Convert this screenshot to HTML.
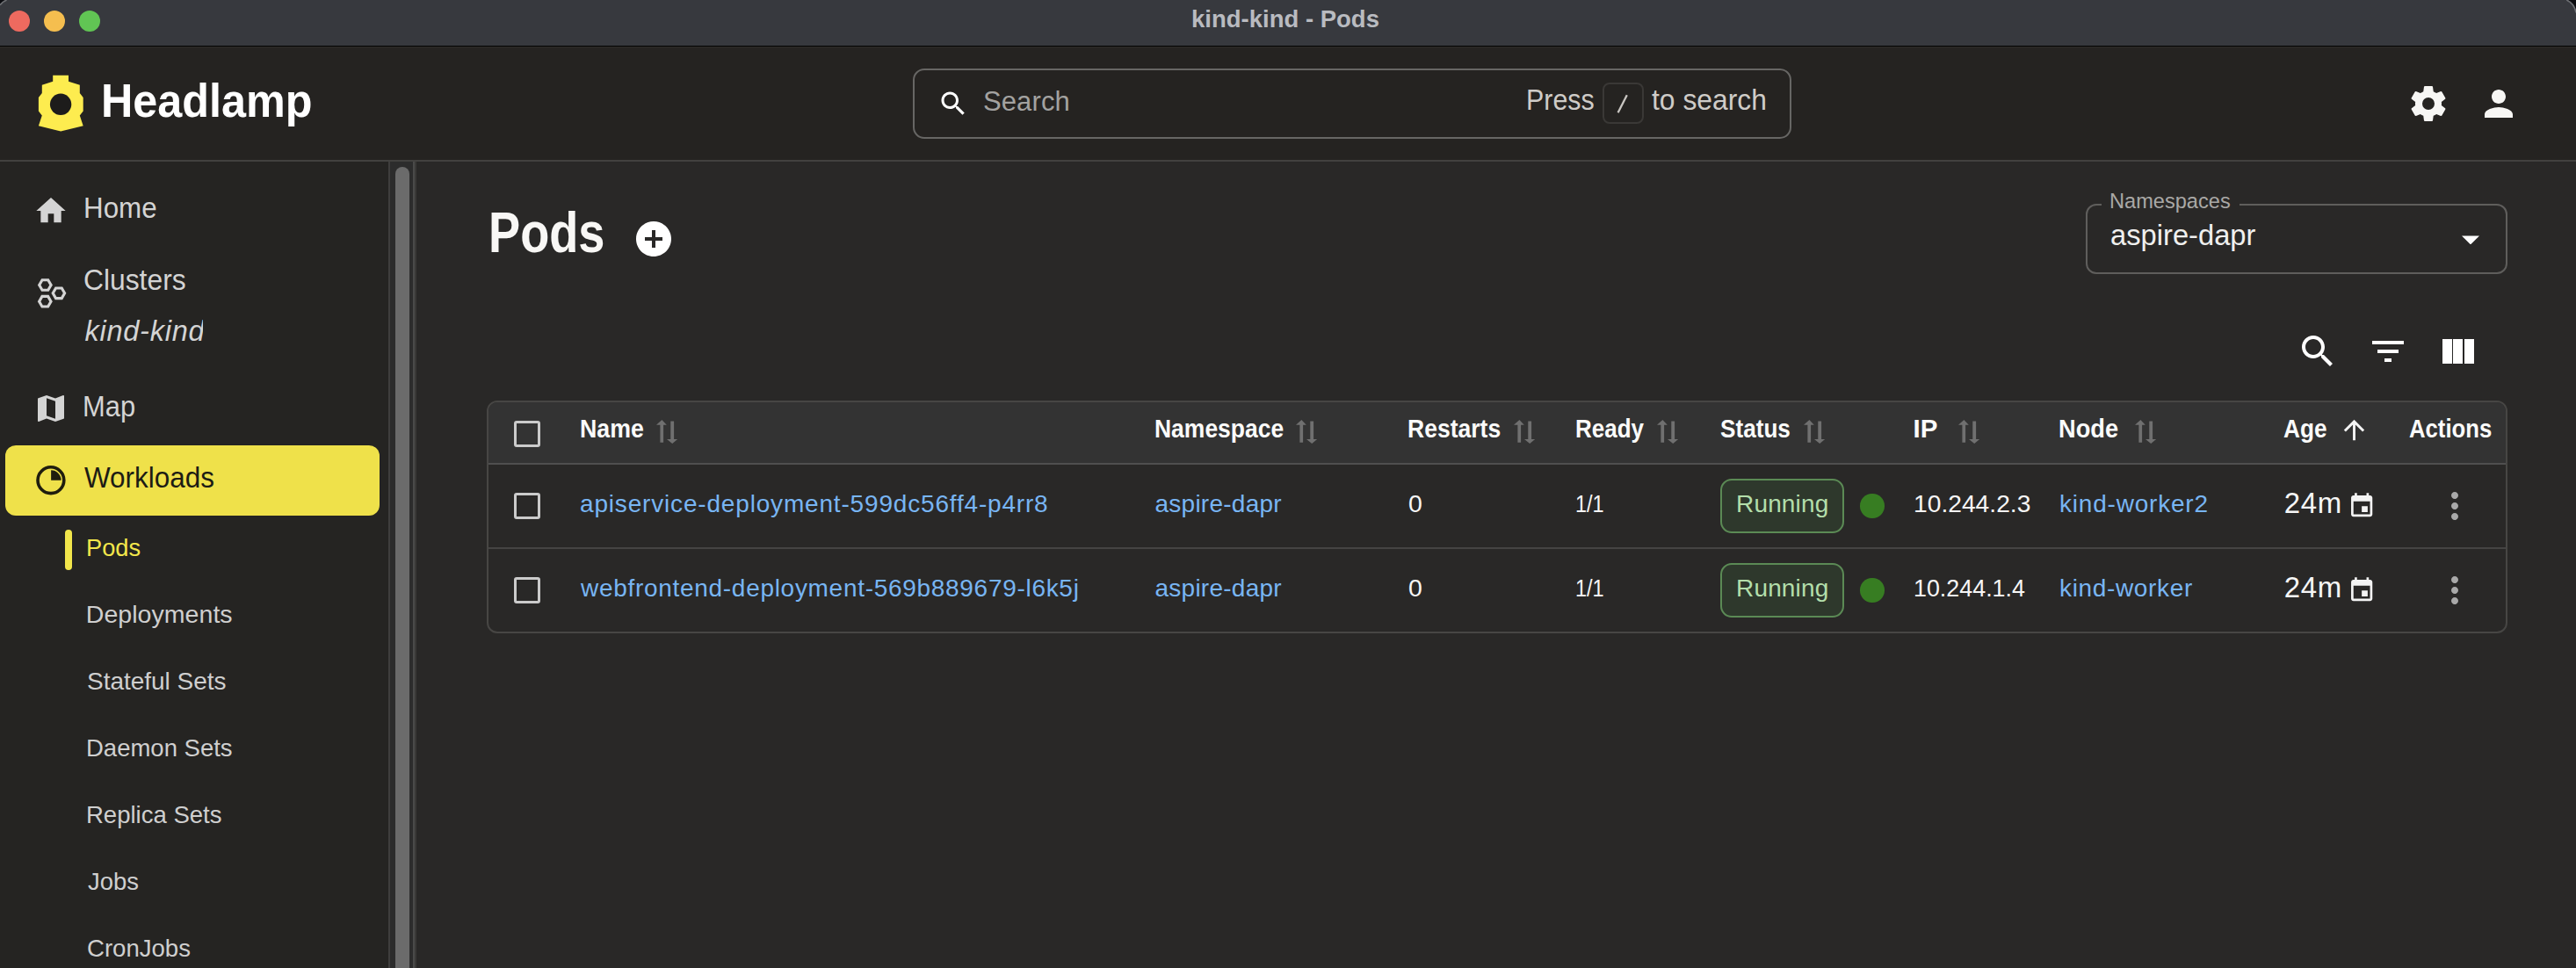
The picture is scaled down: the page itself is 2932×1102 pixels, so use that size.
<!DOCTYPE html><html><head><meta charset="utf-8"><title>Headlamp - Pods</title><style>
*{margin:0;padding:0;box-sizing:border-box}
html,body{width:2932px;height:1102px;overflow:hidden;background:#15171c;font-family:"Liberation Sans",sans-serif}
.a{position:absolute}
.t{position:absolute;white-space:nowrap;font-family:"Liberation Sans",sans-serif}
</style></head><body><div class="a" style="left:0;top:0;width:2932px;height:1102px;background:#292827;overflow:hidden"><div class="a" style="left:0;top:0;width:2932px;height:52px;background:#37393e"></div><div class="a" style="left:0;top:52px;width:2932px;height:1px;background:#000"></div><div class="a" style="left:0;top:53px;width:2932px;height:1px;background:#2e2c29"></div><div class="a" style="left:10px;top:12px;width:24px;height:24px;border-radius:50%;background:#ee6a5f"></div><div class="a" style="left:50px;top:12px;width:24px;height:24px;border-radius:50%;background:#f5be4f"></div><div class="a" style="left:90px;top:12px;width:24px;height:24px;border-radius:50%;background:#61c554"></div><div class="a" style="left:0;top:54px;width:2932px;height:128px;background:#252321"></div><div class="a" style="left:0;top:182px;width:2932px;height:2px;background:#42413f"></div><svg class="a" style="left:0px;top:0px;" width="120" height="160" viewBox="0 0 120 160"><polygon points="60.2,85.8 78,85.8 78,92.8 90.8,96.7 90.8,106 94.7,111 94.7,126.5 90.8,131.5 94.7,143.2 69.1,149.4 43.9,143.2 47.8,131.5 43.9,126.5 43.9,111 47.8,106 47.8,96.7 60.2,92.8" fill="#fdec4f"/><circle cx="69.1" cy="118.8" r="12.2" fill="#1d1c1b"/></svg><div class="a" style="left:1039px;top:78px;width:1000px;height:80px;border:2px solid #676664;border-radius:13px;background:#252321"></div><svg class="a" style="left:1066.6px;top:99.5px;" width="36" height="36" viewBox="0 0 24 24"><path fill="#fff" d="M15.5 14h-.79l-.28-.27C15.410 12.59 16 11.11 16 9.5 16 5.91 13.09 3 9.5 3S3 5.91 3 9.5 5.91 16 9.5 16c1.61 0 3.09-.59 4.23-1.57l.27.28v.79l5 4.99L20.49 19l-4.99-5zm-6 0C7.01 14 5 11.99 5 9.5S7.01 5 9.5 5 14 7.01 14 9.5 11.99 14 9.5 14z"/></svg><div class="a" style="left:1823.7px;top:94.3px;width:47.3px;height:47.2px;border:2px solid #3a3836;border-radius:8px"></div><svg class="a" style="left:1830px;top:100px;" width="40" height="40" viewBox="1830 100 40 40"><path d="M1841.6 128.3L1851.8 108.2" stroke="#c9c6c2" stroke-width="2.3"/></svg><svg class="a" style="left:2740px;top:94px;" width="48" height="48" viewBox="0 0 24 24"><path fill="#f7f6f4" d="M12,15.5A3.5,3.5 0 0,1 8.5,12A3.5,3.5 0 0,1 12,8.5A3.5,3.5 0 0,1 15.5,12A3.5,3.5 0 0,1 12,15.5M19.43,12.97C19.47,12.65 19.5,12.33 19.5,12C19.5,11.67 19.47,11.34 19.43,11L21.54,9.37C21.730,9.22 21.78,8.95 21.66,8.73L19.66,5.27C19.54,5.05 19.27,4.96 19.05,5.05L16.56,6.05C16.04,5.66 15.5,5.32 14.87,5.07L14.5,2.42C14.46,2.18 14.25,2 14,2H10C9.75,2 9.54,2.18 9.5,2.42L9.13,5.07C8.5,5.32 7.96,5.66 7.44,6.05L4.95,5.05C4.73,4.96 4.46,5.05 4.34,5.27L2.34,8.73C2.21,8.95 2.27,9.22 2.46,9.37L4.57,11C4.53,11.34 4.5,11.67 4.5,12C4.5,12.33 4.53,12.65 4.57,12.97L2.46,14.63C2.27,14.78 2.21,15.05 2.34,15.27L4.34,18.73C4.46,18.95 4.73,19.03 4.95,18.95L7.44,17.940C7.96,18.34 8.5,18.68 9.13,18.93L9.5,21.58C9.54,21.82 9.75,22 10,22H14C14.25,22 14.46,21.82 14.5,21.58L14.87,18.93C15.5,18.67 16.04,18.34 16.56,17.94L19.05,18.95C19.27,19.03 19.54,18.95 19.66,18.73L21.66,15.27C21.78,15.05 21.73,14.78 21.54,14.63L19.43,12.97Z"/></svg><svg class="a" style="left:2820px;top:94px;" width="48" height="48" viewBox="0 0 24 24"><path fill="#f7f6f4" d="M12 12c2.21 0 4-1.790 4-4s-1.79-4-4-4-4 1.79-4 4 1.79 4 4 4zm0 2c-2.67 0-8 1.34-8 4v2h16v-2c0-2.66-5.33-4-8-4z"/></svg><div class="a" style="left:0;top:184px;width:442px;height:918px;background:#252422"></div><div class="a" style="left:442px;top:184px;width:2px;height:918px;background:#3f3e3d"></div><div class="a" style="left:444px;top:184px;width:26px;height:918px;background:#2c2c2c"></div><div class="a" style="left:450px;top:190px;width:16px;height:940px;border-radius:8px;background:#6b6b6b"></div><div class="a" style="left:470px;top:184px;width:2px;height:918px;background:#4a4a49"></div><div class="a" style="left:472px;top:184px;width:2px;height:918px;background:#3a3937"></div><svg class="a" style="left:38px;top:220px;" width="40" height="40" viewBox="0 0 24 24"><path fill="#d4d4d4" d="M10 20v-6h4v6h5v-8h3L12 3 2 12h3v8z"/></svg><svg class="a" style="left:0px;top:300px;" width="100" height="60" viewBox="0 300 100 60"><path fill="#d4d4d4" fill-rule="evenodd" d="M59.90,324.50 L55.65,331.86 L47.15,331.86 L42.90,324.50 L47.15,317.14 L55.65,317.14ZM56.30,324.50 L53.85,328.74 L48.95,328.74 L46.50,324.50 L48.95,320.26 L53.85,320.26ZM75.40,333.80 L71.15,341.16 L62.65,341.16 L58.40,333.80 L62.65,326.44 L71.15,326.44ZM71.80,333.80 L69.35,338.04 L64.45,338.04 L62.00,333.80 L64.45,329.56 L69.35,329.56ZM59.80,343.20 L55.55,350.56 L47.05,350.56 L42.80,343.20 L47.05,335.84 L55.55,335.84ZM56.20,343.20 L53.75,347.44 L48.85,347.44 L46.40,343.20 L48.85,338.96 L53.75,338.96Z"/></svg><svg class="a" style="left:37.8px;top:444.8px;" width="40" height="40" viewBox="0 0 24 24"><path fill="#d4d4d4" d="M20.5 3l-.16.03L15 5.1 9 3 3.36 4.9c-.21.07-.36.25-.36.48V20.5c0 .28.22.5.5.5l.16-.03L9 18.9l6 2.1 5.64-1.9c.21-.07.36-.25.36-.48V3.5c0-.28-.22-.5-.5-.5zM15 19l-6-2.11V5l6 2.11V19z"/></svg><div class="a" style="left:6px;top:507px;width:425.5px;height:80px;border-radius:12px;background:#efe14a"></div><svg class="a" style="left:0px;top:500px;" width="100" height="100" viewBox="0 500 100 100"><circle cx="57.9" cy="546.7" r="14.9" fill="none" stroke="#1f1d0e" stroke-width="3.6"/><path d="M58.1 546.8V535.3A11.5 11.5 0 0 1 69.6 546.8Z" fill="#1f1d0e"/></svg><div class="a" style="left:74.4px;top:602.6px;width:7.6px;height:46px;border-radius:4px;background:#f2e64b"></div><svg class="a" style="left:720px;top:248px;" width="48" height="48" viewBox="0 0 24 24"><path fill="#fff" d="M12 2C6.48 2 2 6.48 2 12s4.48 10 10 10 10-4.48 10-10S17.52 2 12 2zm5 11h-4v4h-2v-4H7v-2h4V7h2v4h4v2z"/></svg><div class="a" style="left:2374px;top:232px;width:479.5px;height:80px;border:2px solid #5f5e5c;border-radius:12px"></div><div class="a" style="left:2391.7px;top:228px;width:157.5px;height:8px;background:#292827"></div><svg class="a" style="left:2801.8px;top:267.5px;" width="20" height="10.8" viewBox="0 0 20 10"><path d="M0 0H20L10 10Z" fill="#ffffff"/></svg><svg class="a" style="left:2613.5px;top:375.9px;" width="48" height="48" viewBox="0 0 24 24"><path fill="#fff" d="M15.5 14h-.79l-.28-.27C15.41 12.59 16 11.11 16 9.5 16 5.91 13.09 3 9.5 3S3 5.91 3 9.5 5.91 16 9.5 16c1.61 0 3.09-.59 4.23-1.57l.27.28v.79l5 4.99L20.49 19l-4.99-5zm-6 0C7.01 14 5 11.99 5 9.5S7.01 5 9.5 5 14 7.01 14 9.5 11.99 14 9.5 14z"/></svg><svg class="a" style="left:2693.8px;top:375.8px;" width="48" height="48" viewBox="0 0 24 24"><path fill="#fff" d="M10 18h4v-2h-4v2zM3 6v2h18V6H3zm3 7h12v-2H6v2z"/></svg><div class="a" style="left:2779.8px;top:386px;width:11.2px;height:28.4px;background:#fff"></div><div class="a" style="left:2792.4px;top:386px;width:11px;height:28.4px;background:#fff"></div><div class="a" style="left:2805px;top:386px;width:11.2px;height:28.4px;background:#fff"></div><div class="a" style="left:554px;top:456px;width:2300px;height:265px;border:2px solid #474644;border-radius:12px;overflow:hidden;background:#292827"><div class="a" style="left:0;top:0;width:2300px;height:69px;background:#333333"></div><div class="a" style="left:0;top:69px;width:2300px;height:2px;background:#4f4f4f"></div><div class="a" style="left:0;top:165px;width:2300px;height:2px;background:#454443"></div></div><div class="a" style="left:585.1px;top:479px;width:30px;height:30px;border:3.2px solid #cbcbcb;border-radius:3px"></div><div class="a" style="left:585.1px;top:561px;width:30px;height:30px;border:3.2px solid #cbcbcb;border-radius:3px"></div><div class="a" style="left:585.1px;top:657px;width:30px;height:30px;border:3.2px solid #cbcbcb;border-radius:3px"></div><svg class="a" style="left:746.8px;top:477.1px;" width="26" height="30" viewBox="746.8 477.1 26 30"><path fill="#707070" d="M753.2 478.1L758.6 483.8H754.9V503.9H751.2V483.8H746.8Z M763.1 479.7H766.9V500.2H771L765 505.1L758.8 500.2H763.1Z"/></svg><svg class="a" style="left:1474.8px;top:477.1px;" width="26" height="30" viewBox="746.8 477.1 26 30"><path fill="#707070" d="M753.2 478.1L758.6 483.8H754.9V503.9H751.2V483.8H746.8Z M763.1 479.7H766.9V500.2H771L765 505.1L758.8 500.2H763.1Z"/></svg><svg class="a" style="left:1722.5px;top:477.1px;" width="26" height="30" viewBox="746.8 477.1 26 30"><path fill="#707070" d="M753.2 478.1L758.6 483.8H754.9V503.9H751.2V483.8H746.8Z M763.1 479.7H766.9V500.2H771L765 505.1L758.8 500.2H763.1Z"/></svg><svg class="a" style="left:1886.4px;top:477.1px;" width="26" height="30" viewBox="746.8 477.1 26 30"><path fill="#707070" d="M753.2 478.1L758.6 483.8H754.9V503.9H751.2V483.8H746.8Z M763.1 479.7H766.9V500.2H771L765 505.1L758.8 500.2H763.1Z"/></svg><svg class="a" style="left:2052.6px;top:477.1px;" width="26" height="30" viewBox="746.8 477.1 26 30"><path fill="#707070" d="M753.2 478.1L758.6 483.8H754.9V503.9H751.2V483.8H746.8Z M763.1 479.7H766.9V500.2H771L765 505.1L758.8 500.2H763.1Z"/></svg><svg class="a" style="left:2228.8px;top:477.1px;" width="26" height="30" viewBox="746.8 477.1 26 30"><path fill="#707070" d="M753.2 478.1L758.6 483.8H754.9V503.9H751.2V483.8H746.8Z M763.1 479.7H766.9V500.2H771L765 505.1L758.8 500.2H763.1Z"/></svg><svg class="a" style="left:2429.8px;top:477.1px;" width="26" height="30" viewBox="746.8 477.1 26 30"><path fill="#707070" d="M753.2 478.1L758.6 483.8H754.9V503.9H751.2V483.8H746.8Z M763.1 479.7H766.9V500.2H771L765 505.1L758.8 500.2H763.1Z"/></svg><svg class="a" style="left:2662px;top:472.2px;" width="35" height="35" viewBox="0 0 24 24"><path fill="#f4f4f4" d="M4 12l1.41 1.41L11 7.83V20h2V7.83l5.58 5.59L20 12l-8-8-8 8z"/></svg><div class="a" style="left:1958px;top:545px;width:140.7px;height:61.8px;border:2px solid #5b8a55;border-radius:13px;background:#2e382c"></div><div class="a" style="left:2117.4px;top:562.3px;width:27.3px;height:27.3px;border-radius:50%;background:#377d22"></div><svg class="a" style="left:2672.1px;top:560.2px;" width="32.3" height="32.3" viewBox="0 0 24 24"><path fill="#f4f4f4" d="M17 12h-5v5h5v-5zM16 1v2H8V1H6v2H5c-1.11 0-1.99.9-1.99 2L3 19c0 1.1.89 2 2 2h14c1.1 0 2-.9 2-2V5c0-1.1-.9-2-2-2h-1V1h-2zm3 18H5V8h14v11z"/></svg><svg class="a" style="left:2769.9px;top:552px;" width="48" height="48" viewBox="0 0 24 24"><path fill="#a9a9a9" d="M12 8c1.1 0 2-.9 2-2s-.9-2-2-2-2 .9-2 2 .9 2 2 2zm0 2c-1.1 0-2 .9-2 2s.9 2 2 2 2-.9 2-2-.9-2-2-2zm0 6c-1.1 0-2 .9-2 2s.9 2 2 2 2-.9 2-2-.9-2-2-2z"/></svg><div class="a" style="left:1958px;top:641px;width:140.7px;height:61.8px;border:2px solid #5b8a55;border-radius:13px;background:#2e382c"></div><div class="a" style="left:2117.4px;top:658.3px;width:27.3px;height:27.3px;border-radius:50%;background:#377d22"></div><svg class="a" style="left:2672.1px;top:656.2px;" width="32.3" height="32.3" viewBox="0 0 24 24"><path fill="#f4f4f4" d="M17 12h-5v5h5v-5zM16 1v2H8V1H6v2H5c-1.11 0-1.99.9-1.99 2L3 19c0 1.1.89 2 2 2h14c1.1 0 2-.9 2-2V5c0-1.1-.9-2-2-2h-1V1h-2zm3 18H5V8h14v11z"/></svg><svg class="a" style="left:2769.9px;top:648px;" width="48" height="48" viewBox="0 0 24 24"><path fill="#a9a9a9" d="M12 8c1.1 0 2-.9 2-2s-.9-2-2-2-2 .9-2 2 .9 2 2 2zm0 2c-1.1 0-2 .9-2 2s.9 2 2 2 2-.9 2-2-.9-2-2-2zm0 6c-1.1 0-2 .9-2 2s.9 2 2 2 2-.9 2-2-.9-2-2-2z"/></svg><span id="t0" class="t" style="left:1355.6px;top:8.1px;font-size:28px;line-height:28px;font-weight:700;color:#b9bbc0;transform:scaleX(0.9823);transform-origin:0 0;">kind-kind - Pods</span><span id="t1" class="t" style="left:115.0px;top:87.9px;font-size:53px;line-height:53px;font-weight:700;color:#ffffff;transform:scaleX(0.9492);transform-origin:0 0;">Headlamp</span><span id="t2" class="t" style="left:1119.0px;top:99.8px;font-size:31px;line-height:31px;font-weight:400;color:#a3a2a0;letter-spacing:0.100px;">Search</span><span id="t3" class="t" style="left:1736.8px;top:97.0px;font-size:33px;line-height:33px;font-weight:400;color:#cfccc8;transform:scaleX(0.9210);transform-origin:0 0;">Press</span><span id="t4" class="t" style="left:1880.2px;top:97.0px;font-size:33px;line-height:33px;font-weight:400;color:#cfccc8;transform:scaleX(0.9642);transform-origin:0 0;">to search</span><span id="t5" class="t" style="left:95.0px;top:220.7px;font-size:32.5px;line-height:32.5px;font-weight:400;color:#d4d4d4;transform:scaleX(0.9643);transform-origin:0 0;">Home</span><span id="t6" class="t" style="left:95.0px;top:302.5px;font-size:32.5px;line-height:32.5px;font-weight:400;color:#d4d4d4;transform:scaleX(0.9786);transform-origin:0 0;">Clusters</span><div class="a" style="left:0px;top:350px;width:230.5px;height:50px;overflow:hidden"><span id="t7" class="t" style="left:96.5px;top:11.1px;font-size:32.5px;line-height:32.5px;font-weight:400;color:#d4d4d4;font-style:italic;letter-spacing:0.750px;">kind-kind</span></div><span id="t8" class="t" style="left:94.1px;top:446.5px;font-size:32.5px;line-height:32.5px;font-weight:400;color:#d4d4d4;transform:scaleX(0.9500);transform-origin:0 0;">Map</span><span id="t9" class="t" style="left:96.0px;top:527.5px;font-size:32.5px;line-height:32.5px;font-weight:400;color:#1d1c14;transform:scaleX(0.9671);transform-origin:0 0;">Workloads</span><span id="t10" class="t" style="left:98.4px;top:608.7px;font-size:28.5px;line-height:28.5px;font-weight:400;color:#f2e64b;transform:scaleX(0.9548);transform-origin:0 0;">Pods</span><span id="t11" class="t" style="left:97.8px;top:684.7px;font-size:28.5px;line-height:28.5px;font-weight:400;color:#cfcfcf;letter-spacing:0.050px;">Deployments</span><span id="t12" class="t" style="left:98.8px;top:760.8px;font-size:28.5px;line-height:28.5px;font-weight:400;color:#cfcfcf;transform:scaleX(0.9812);transform-origin:0 0;">Stateful Sets</span><span id="t13" class="t" style="left:97.9px;top:836.8px;font-size:28.5px;line-height:28.5px;font-weight:400;color:#cfcfcf;transform:scaleX(0.9647);transform-origin:0 0;">Daemon Sets</span><span id="t14" class="t" style="left:97.9px;top:912.9px;font-size:28.5px;line-height:28.5px;font-weight:400;color:#cfcfcf;transform:scaleX(0.9656);transform-origin:0 0;">Replica Sets</span><span id="t15" class="t" style="left:99.8px;top:988.9px;font-size:28.5px;line-height:28.5px;font-weight:400;color:#cfcfcf;transform:scaleX(0.9617);transform-origin:0 0;">Jobs</span><span id="t16" class="t" style="left:98.8px;top:1065.0px;font-size:28.5px;line-height:28.5px;font-weight:400;color:#cfcfcf;transform:scaleX(0.9667);transform-origin:0 0;">CronJobs</span><span id="t17" class="t" style="left:555.6px;top:232.9px;font-size:64px;line-height:64px;font-weight:700;color:#f8f7f5;transform:scaleX(0.8467);transform-origin:0 0;">Pods</span><span id="t18" class="t" style="left:2400.9px;top:216.6px;font-size:24.5px;line-height:24.5px;font-weight:400;color:#a9a8a6;transform:scaleX(0.9629);transform-origin:0 0;">Namespaces</span><span id="t19" class="t" style="left:2401.8px;top:251.4px;font-size:33px;line-height:33px;font-weight:400;color:#f0f0ef;transform:scaleX(0.9910);transform-origin:0 0;">aspire-dapr</span><span id="t20" class="t" style="left:659.8px;top:473.0px;font-size:29.5px;line-height:29.5px;font-weight:700;color:#fbfbfa;transform:scaleX(0.9064);transform-origin:0 0;">Name</span><span id="t21" class="t" style="left:1313.7px;top:473.0px;font-size:29.5px;line-height:29.5px;font-weight:700;color:#fbfbfa;transform:scaleX(0.8975);transform-origin:0 0;">Namespace</span><span id="t22" class="t" style="left:1601.8px;top:473.0px;font-size:29.5px;line-height:29.5px;font-weight:700;color:#fbfbfa;transform:scaleX(0.8991);transform-origin:0 0;">Restarts</span><span id="t23" class="t" style="left:1792.9px;top:473.0px;font-size:29.5px;line-height:29.5px;font-weight:700;color:#fbfbfa;transform:scaleX(0.8816);transform-origin:0 0;">Ready</span><span id="t24" class="t" style="left:1958.1px;top:473.0px;font-size:29.5px;line-height:29.5px;font-weight:700;color:#fbfbfa;transform:scaleX(0.8864);transform-origin:0 0;">Status</span><span id="t25" class="t" style="left:2177.5px;top:473.0px;font-size:29.5px;line-height:29.5px;font-weight:700;color:#fbfbfa;letter-spacing:0.000px;">IP</span><span id="t26" class="t" style="left:2343.2px;top:473.0px;font-size:29.5px;line-height:29.5px;font-weight:700;color:#fbfbfa;transform:scaleX(0.9225);transform-origin:0 0;">Node</span><span id="t27" class="t" style="left:2598.7px;top:473.0px;font-size:29.5px;line-height:29.5px;font-weight:700;color:#fbfbfa;transform:scaleX(0.8889);transform-origin:0 0;">Age</span><span id="t28" class="t" style="left:2742.0px;top:473.0px;font-size:29.5px;line-height:29.5px;font-weight:700;color:#fbfbfa;transform:scaleX(0.8717);transform-origin:0 0;">Actions</span><span id="t29" class="t" style="left:660.0px;top:560.4px;font-size:28px;line-height:28px;font-weight:400;color:#78b5f3;letter-spacing:0.824px;">apiservice-deployment-599dc56ff4-p4rr8</span><span id="t30" class="t" style="left:1314.5px;top:560.4px;font-size:28px;line-height:28px;font-weight:400;color:#78b5f3;letter-spacing:0.250px;">aspire-dapr</span><span id="t31" class="t" style="left:1603.1px;top:559.0px;font-size:28.5px;line-height:28.5px;font-weight:400;color:#f6f6f6;">0</span><span id="t32" class="t" style="left:1793.3px;top:559.0px;font-size:28.5px;line-height:28.5px;font-weight:400;color:#f6f6f6;transform:scaleX(0.8243);transform-origin:0 0;">1/1</span><span id="t33" class="t" style="left:1976.0px;top:560.4px;font-size:28px;line-height:28px;font-weight:400;color:#b3deaa;letter-spacing:0.167px;">Running</span><span id="t34" class="t" style="left:2177.9px;top:559.0px;font-size:28.5px;line-height:28.5px;font-weight:400;color:#f6f6f6;transform:scaleX(0.9902);transform-origin:0 0;">10.244.2.3</span><span id="t35" class="t" style="left:2344.0px;top:560.4px;font-size:28px;line-height:28px;font-weight:400;color:#78b5f3;letter-spacing:0.791px;">kind-worker2</span><span id="t36" class="t" style="left:2599.8px;top:556.2px;font-size:33px;line-height:33px;font-weight:400;color:#f6f6f6;letter-spacing:0.650px;">24m</span><span id="t37" class="t" style="left:661.0px;top:656.4px;font-size:28px;line-height:28px;font-weight:400;color:#78b5f3;letter-spacing:0.703px;">webfrontend-deployment-569b889679-l6k5j</span><span id="t38" class="t" style="left:1314.5px;top:656.4px;font-size:28px;line-height:28px;font-weight:400;color:#78b5f3;letter-spacing:0.250px;">aspire-dapr</span><span id="t39" class="t" style="left:1603.1px;top:655.0px;font-size:28.5px;line-height:28.5px;font-weight:400;color:#f6f6f6;">0</span><span id="t40" class="t" style="left:1793.3px;top:655.0px;font-size:28.5px;line-height:28.5px;font-weight:400;color:#f6f6f6;transform:scaleX(0.8243);transform-origin:0 0;">1/1</span><span id="t41" class="t" style="left:1976.0px;top:656.4px;font-size:28px;line-height:28px;font-weight:400;color:#b3deaa;letter-spacing:0.167px;">Running</span><span id="t42" class="t" style="left:2178.0px;top:655.0px;font-size:28.5px;line-height:28.5px;font-weight:400;color:#f6f6f6;transform:scaleX(0.9424);transform-origin:0 0;">10.244.1.4</span><span id="t43" class="t" style="left:2344.0px;top:656.4px;font-size:28px;line-height:28px;font-weight:400;color:#78b5f3;letter-spacing:0.650px;">kind-worker</span><span id="t44" class="t" style="left:2599.8px;top:652.2px;font-size:33px;line-height:33px;font-weight:400;color:#f6f6f6;letter-spacing:0.650px;">24m</span></div><svg class="a" style="left:0px;top:0px;" width="40" height="40" viewBox="0 0 40 40"><path d="M0 0H6.8A17 17 0 0 0 0 5.2Z" fill="#0b0c10"/><path d="M7.6 0A17 17 0 0 0 0 5.9" fill="none" stroke="#6c6e72" stroke-width="1.6"/></svg><svg class="a" style="left:2892px;top:0px;" width="40" height="40" viewBox="2892 0 40 40"><path d="M2932 0H2922A19 19 0 0 1 2932 13.6Z" fill="#0b0c10"/><path d="M2921.3 0A19 19 0 0 1 2932 14.5" fill="none" stroke="#6c6e72" stroke-width="1.6"/></svg></body></html>
